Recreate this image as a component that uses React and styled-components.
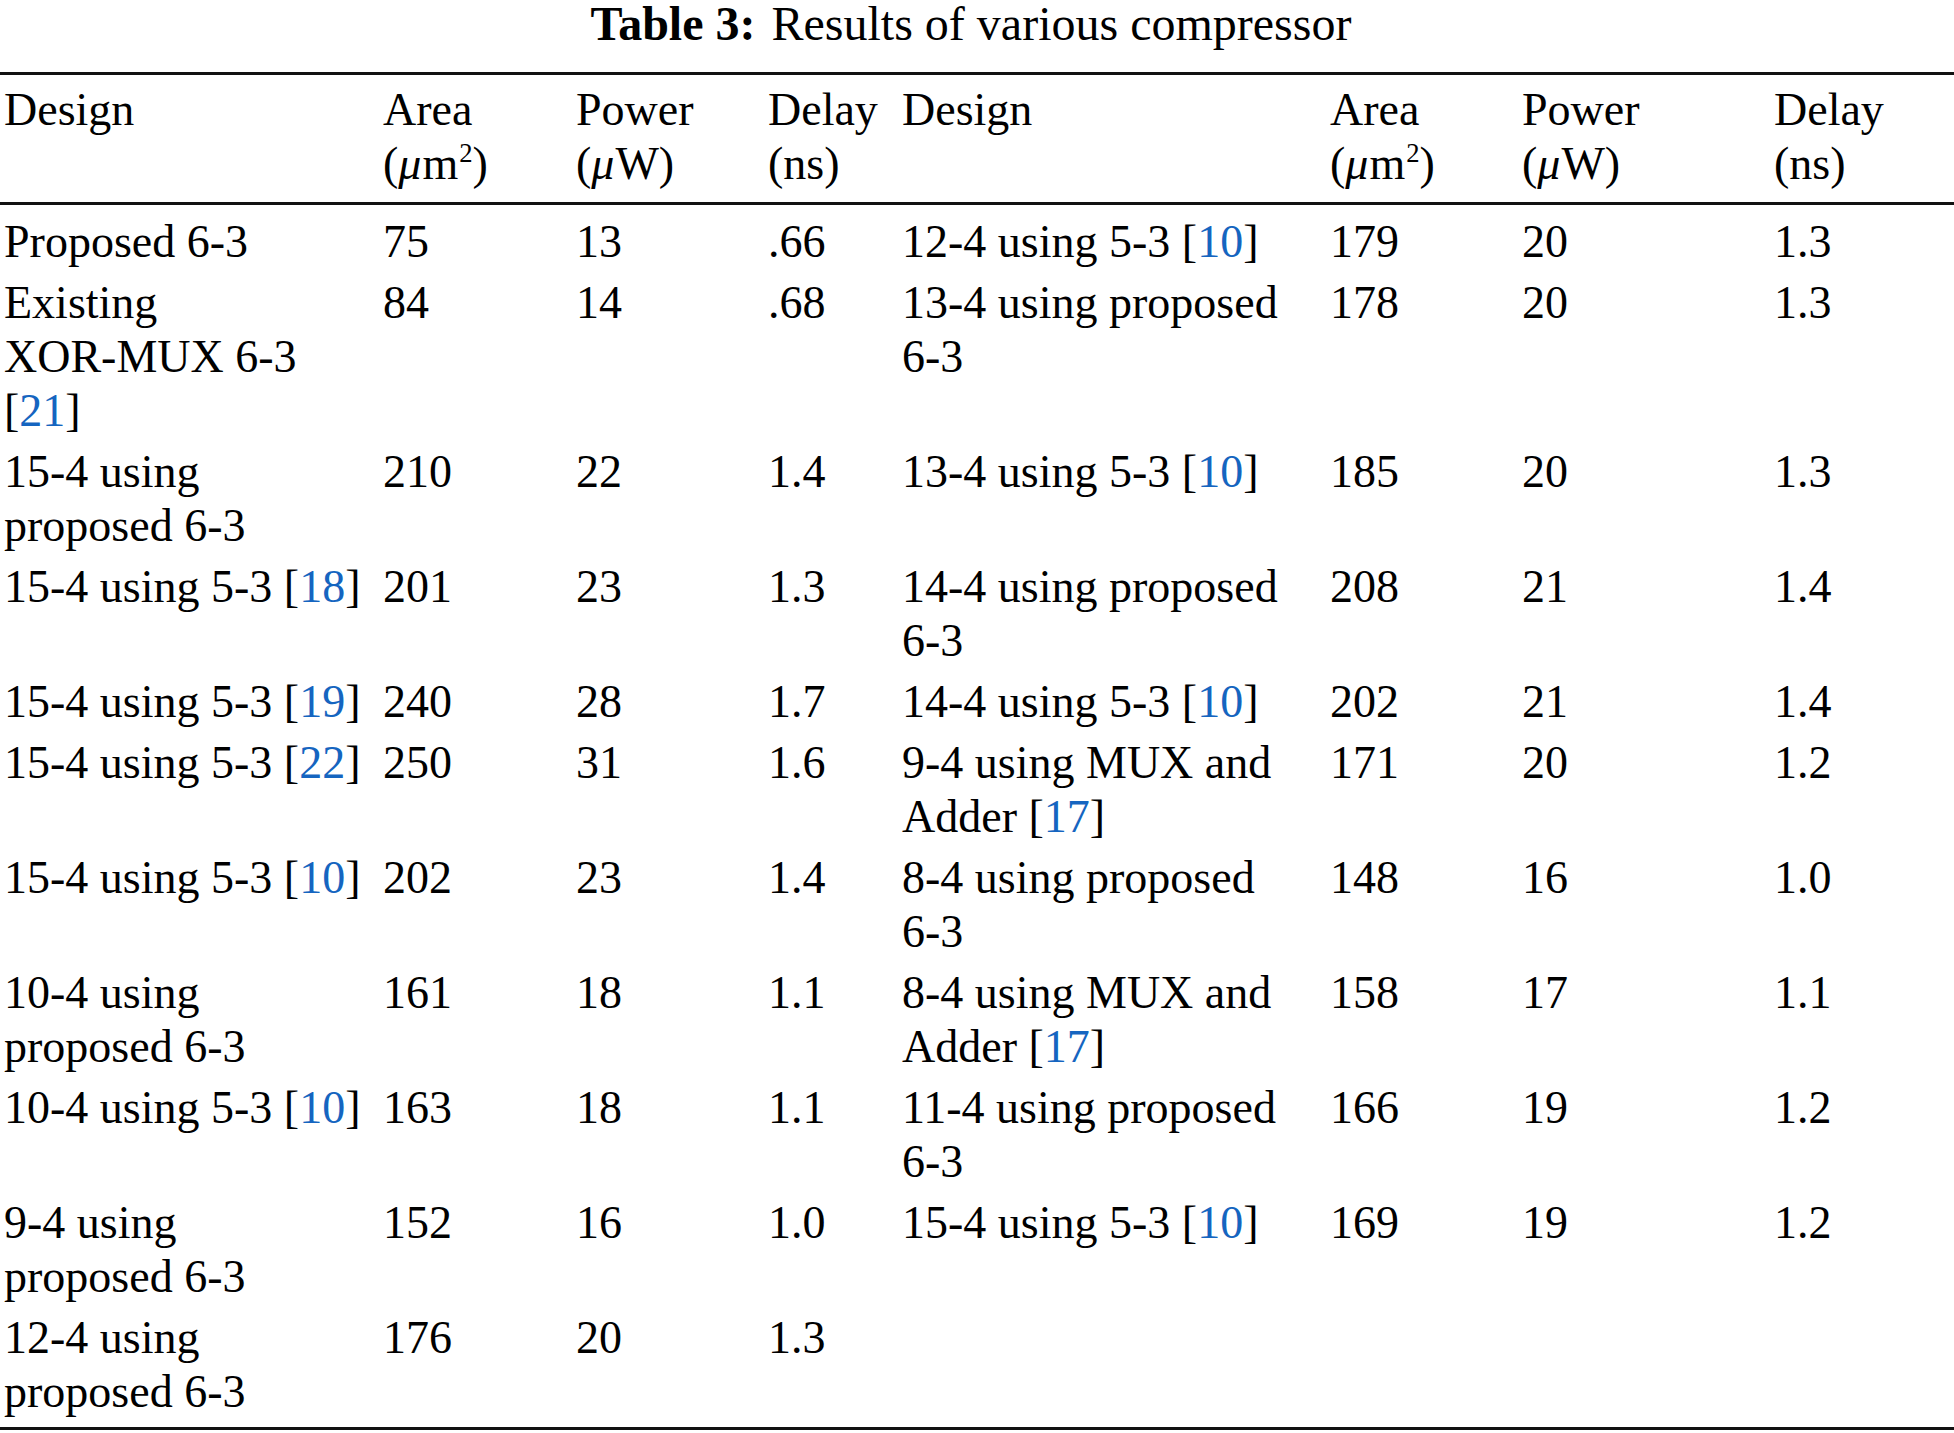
import React from "react";
import styled, { createGlobalStyle } from "styled-components";

const Global = createGlobalStyle`
  html, body { margin: 0; padding: 0; background: #ffffff; }
`;

const Page = styled.div`
  width: 1954px;
  font-family: "Liberation Serif", "Times New Roman", serif;
  font-size: 46px;
  color: #000;
`;

const Caption = styled.div`
  text-align: center;
  font-size: 48px;
  line-height: 48px;
  margin-bottom: 24px;
  padding-right: 12px;
  white-space: nowrap;
`;

const CaptionLabel = styled.b`
  font-weight: 700;
  margin-right: 4px;
`;

const Table = styled.table`
  width: 100%;
  table-layout: fixed;
  border-collapse: separate;
  border-spacing: 0;
  border-top: 3px solid #111;
  border-bottom: 3px solid #111;
  line-height: 54px;
`;

const Col = styled.col`
  width: ${(p) => p.$w}px;
`;

const Th = styled.th`
  font-weight: 400;
  text-align: left;
  vertical-align: top;
  padding: 7.5px 4px 11.5px;
  border-bottom: 3px solid #111;
`;

const Td = styled.td`
  text-align: left;
  vertical-align: top;
  padding: ${(p) => (p.$first ? "9.5px" : "0")} 4px ${(p) => (p.$last ? "7.5px" : "7.1px")};
`;

const Line = styled.span`
  display: block;
  white-space: nowrap;
`;

const Cite = styled.span`
  color: #1565c0;
`;

const Mu = styled.i`
  font-style: italic;
  margin-right: 1px;
`;

const Sup = styled.sup`
  font-size: 0.58em;
  line-height: 0;
  vertical-align: 0.62em;
  margin-left: 1px;
`;

const widths = [379, 193, 192, 134, 428, 192, 252, 184];

const rows = [
  [["Proposed 6-3"], "75", "13", ".66", ["12-4 using 5-3 [10]"], "179", "20", "1.3"],
  [["Existing", "XOR-MUX 6-3", "[21]"], "84", "14", ".68", ["13-4 using proposed", "6-3"], "178", "20", "1.3"],
  [["15-4 using", "proposed 6-3"], "210", "22", "1.4", ["13-4 using 5-3 [10]"], "185", "20", "1.3"],
  [["15-4 using 5-3 [18]"], "201", "23", "1.3", ["14-4 using proposed", "6-3"], "208", "21", "1.4"],
  [["15-4 using 5-3 [19]"], "240", "28", "1.7", ["14-4 using 5-3 [10]"], "202", "21", "1.4"],
  [["15-4 using 5-3 [22]"], "250", "31", "1.6", ["9-4 using MUX and", "Adder [17]"], "171", "20", "1.2"],
  [["15-4 using 5-3 [10]"], "202", "23", "1.4", ["8-4 using proposed", "6-3"], "148", "16", "1.0"],
  [["10-4 using", "proposed 6-3"], "161", "18", "1.1", ["8-4 using MUX and", "Adder [17]"], "158", "17", "1.1"],
  [["10-4 using 5-3 [10]"], "163", "18", "1.1", ["11-4 using proposed", "6-3"], "166", "19", "1.2"],
  [["9-4 using", "proposed 6-3"], "152", "16", "1.0", ["15-4 using 5-3 [10]"], "169", "19", "1.2"],
  [["12-4 using", "proposed 6-3"], "176", "20", "1.3", [], "", "", ""],
];

function renderText(text) {
  const parts = text.split(/\[(\d+)\]/);
  return parts.map((part, i) =>
    i % 2 === 1 ? (
      <React.Fragment key={i}>
        [<Cite>{part}</Cite>]
      </React.Fragment>
    ) : (
      <React.Fragment key={i}>{part}</React.Fragment>
    )
  );
}

function Cell({ value, first, last }) {
  const lines = Array.isArray(value) ? value : [value];
  return (
    <Td $first={first} $last={last}>
      {lines.map((l, i) => (
        <Line key={i}>{renderText(l)}</Line>
      ))}
    </Td>
  );
}

function HeaderGroup() {
  return (
    <>
      <Th>
        <Line>Design</Line>
      </Th>
      <Th>
        <Line>Area</Line>
        <Line>
          (<Mu>μ</Mu>m<Sup>2</Sup>)
        </Line>
      </Th>
      <Th>
        <Line>Power</Line>
        <Line>
          (<Mu>μ</Mu>W)
        </Line>
      </Th>
      <Th>
        <Line>Delay</Line>
        <Line>(ns)</Line>
      </Th>
    </>
  );
}

export default function App() {
  return (
    <Page>
      <Global />
      <Caption>
        <CaptionLabel>Table 3:</CaptionLabel> Results of various compressor
      </Caption>
      <Table>
        <colgroup>
          {widths.map((w, i) => (
            <Col key={i} $w={w} />
          ))}
        </colgroup>
        <thead>
          <tr>
            <HeaderGroup />
            <HeaderGroup />
          </tr>
        </thead>
        <tbody>
          {rows.map((row, r) => (
            <tr key={r}>
              {row.map((v, c) => (
                <Cell key={c} value={v} first={r === 0} last={r === rows.length - 1} />
              ))}
            </tr>
          ))}
        </tbody>
      </Table>
    </Page>
  );
}
